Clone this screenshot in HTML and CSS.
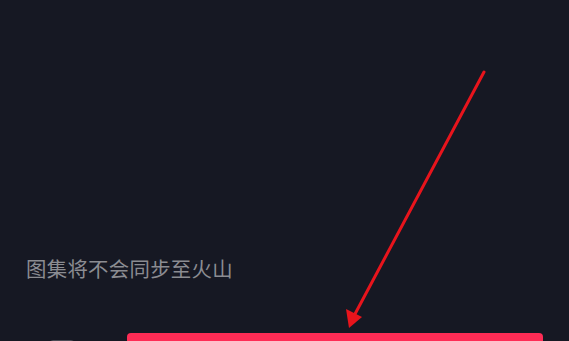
FILE: index.html
```html
<!DOCTYPE html>
<html lang="zh">
<head>
<meta charset="utf-8">
<link rel="stylesheet" href="styles.css">
</head>
<body>
<div class="screen">
  <p class="notice">图集将不会同步至火山</p>
  <div class="actions">
    <span class="check"></span>
    <div class="primary"></div>
  </div>
  <svg class="arrow" width="569" height="341" viewBox="0 0 569 341">
    <line x1="484" y1="72" x2="355" y2="314" stroke="#e8141c" stroke-width="3" stroke-linecap="round"/>
    <polygon points="349,328 346,309 362,317" fill="#e8141c"/>
  </svg>
</div>
</body>
</html>
```
FILE: styles.css
```css
html, body {
  margin: 0;
  padding: 0;
  background: #161823;
}
.screen {
  position: relative;
  width: 569px;
  height: 341px;
  overflow: hidden;
  background: #161823;
  padding-top: 254px;
  box-sizing: border-box;
}
.notice {
  margin: 0 0 0 26px;
  font-family: "Noto Sans CJK SC", "Noto Sans", sans-serif;
  font-size: 20.4px;
  letter-spacing: 0.3px;
  line-height: 28px;
  color: #8b8c92;
}
.actions {
  display: flex;
  align-items: flex-start;
  margin-top: 51px;
}
.check {
  width: 26px;
  height: 26px;
  margin: 7px 0 0 49px;
  border: 1px solid #4a4b55;
  border-radius: 4px;
  box-sizing: border-box;
  flex: none;
}
.primary {
  margin-left: 52px;
  width: 416px;
  height: 44px;
  background: #fe2c55;
  border-radius: 4px;
  flex: none;
}
.arrow {
  position: absolute;
  left: 0;
  top: 0;
}
```
